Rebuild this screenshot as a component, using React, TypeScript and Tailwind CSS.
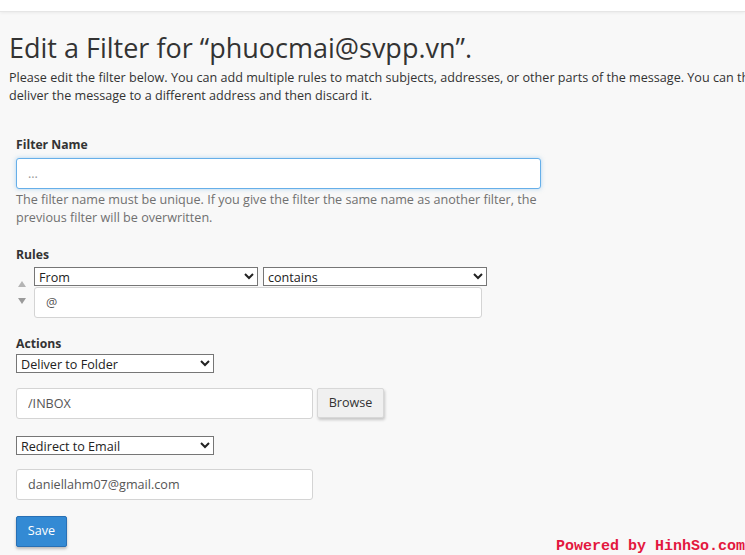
import React from "react";

function Field({ value, className = "" }: { value: string; className?: string }) {
  return (
    <input
      readOnly
      value={value}
      className={`h-[31px] rounded-[3px] border border-[#d4d4d4] bg-white px-[11px] text-[12.6px] text-[#555] outline-none ${className}`}
    />
  );
}

function Select({ options, className = "" }: { options: string[]; className?: string }) {
  return (
    <select
      defaultValue={options[0]}
      className={`h-[19px] border border-[#767676] bg-white px-0 text-[12.6px] leading-none text-[#222] ${className}`}
    >
      {options.map((o) => (
        <option key={o}>{o}</option>
      ))}
    </select>
  );
}

export default function App() {
  return (
    <div
      className="relative h-[555px] w-[745px] overflow-hidden bg-[#f8f8f8] text-[#333]"
      style={{ fontFamily: '"Open Sans", "Liberation Sans", sans-serif' }}
    >
      {/* top bar */}
      <div className="h-[12px] border-b border-[#e6e6e6] bg-white shadow-[0_1px_3px_rgba(0,0,0,0.06)]" />

      <div className="pl-[9px] pt-[17px]">
        <h1 className="whitespace-nowrap text-[27px] leading-[38px] font-normal text-[#333]">
          Edit a Filter for “phuocmai@svpp.vn”.
        </h1>
        <p className="mt-[2px] whitespace-nowrap text-[12.6px] leading-[18px] text-[#333]">
          Please edit the filter below. You can add multiple rules to match subjects, addresses, or other parts of the
          message. You can then add multiple actions to take on a message such as to
          <br />
          deliver the message to a different address and then discard it.
        </p>
      </div>

      <div className="px-[16px] pt-[31px]">
        {/* filter name */}
        <div className="text-[12.2px] font-bold leading-[18px]">Filter Name</div>
        <input
          readOnly
          value="..."
          className="mt-[4px] h-[31px] w-[525px] rounded-[3px] border border-[#66afe9] bg-white px-[11px] text-[12.6px] text-[#999] shadow-[0_0_4px_rgba(102,175,233,0.5)] outline-none"
        />
        <p className="mt-[2px] w-[530px] text-[12.6px] leading-[18px] text-[#707070]">
          The filter name must be unique. If you give the filter the same name as another filter, the previous filter
          will be overwritten.
        </p>

        {/* rules */}
        <div className="mt-[19px] text-[12.2px] font-bold leading-[18px]">Rules</div>
        <div className="mt-[3px] flex">
          <div className="flex w-[18px] flex-col items-start gap-[11px] pl-[2px] pt-[14px]">
            <svg width="8" height="6" viewBox="0 0 8 6">
              <path d="M4 0 L8 6 L0 6 Z" fill="#b4b4b4" />
            </svg>
            <svg width="8" height="6" viewBox="0 0 8 6">
              <path d="M0 0 L8 0 L4 6 Z" fill="#9a9a9a" />
            </svg>
          </div>
          <div className="flex flex-col">
            <div className="flex gap-[5px]">
              <Select options={["From"]} className="w-[224px]" />
              <Select options={["contains"]} className="w-[224px]" />
            </div>
            <Field value="@" className="mt-[1px] w-[448px]" />
          </div>
        </div>

        {/* actions */}
        <div className="mt-[17px] text-[12.2px] font-bold leading-[18px]">Actions</div>
        <Select options={["Deliver to Folder"]} className="mt-[1px] block w-[198px]" />
        <div className="mt-[15px] flex items-start gap-[4px]">
          <Field value="/INBOX" className="w-[297px]" />
          <button className="h-[30px] w-[67px] rounded-[2px] border border-[#d8d8d8] bg-[#f0f0f0] text-[12.6px] text-[#333] shadow-[1px_2px_3px_rgba(0,0,0,0.2)]">
            Browse
          </button>
        </div>
        <Select options={["Redirect to Email"]} className="mt-[17px] block w-[198px]" />
        <Field value="daniellahm07@gmail.com" className="mt-[14px] block w-[297px]" />
        <button className="mt-[16px] h-[31px] w-[51px] rounded-[2px] border border-[#2870b5] bg-[#338ad4] text-[12.6px] text-white shadow-[0_2px_3px_rgba(0,0,0,0.25)]">
          Save
        </button>
      </div>

      <div
        className="absolute bottom-[1px] right-0 whitespace-nowrap text-[15px] font-bold leading-[15px] text-[#e3173e]"
        style={{ fontFamily: '"Liberation Mono", monospace' }}
      >
        Powered by HinhSo.com
      </div>
    </div>
  );
}
